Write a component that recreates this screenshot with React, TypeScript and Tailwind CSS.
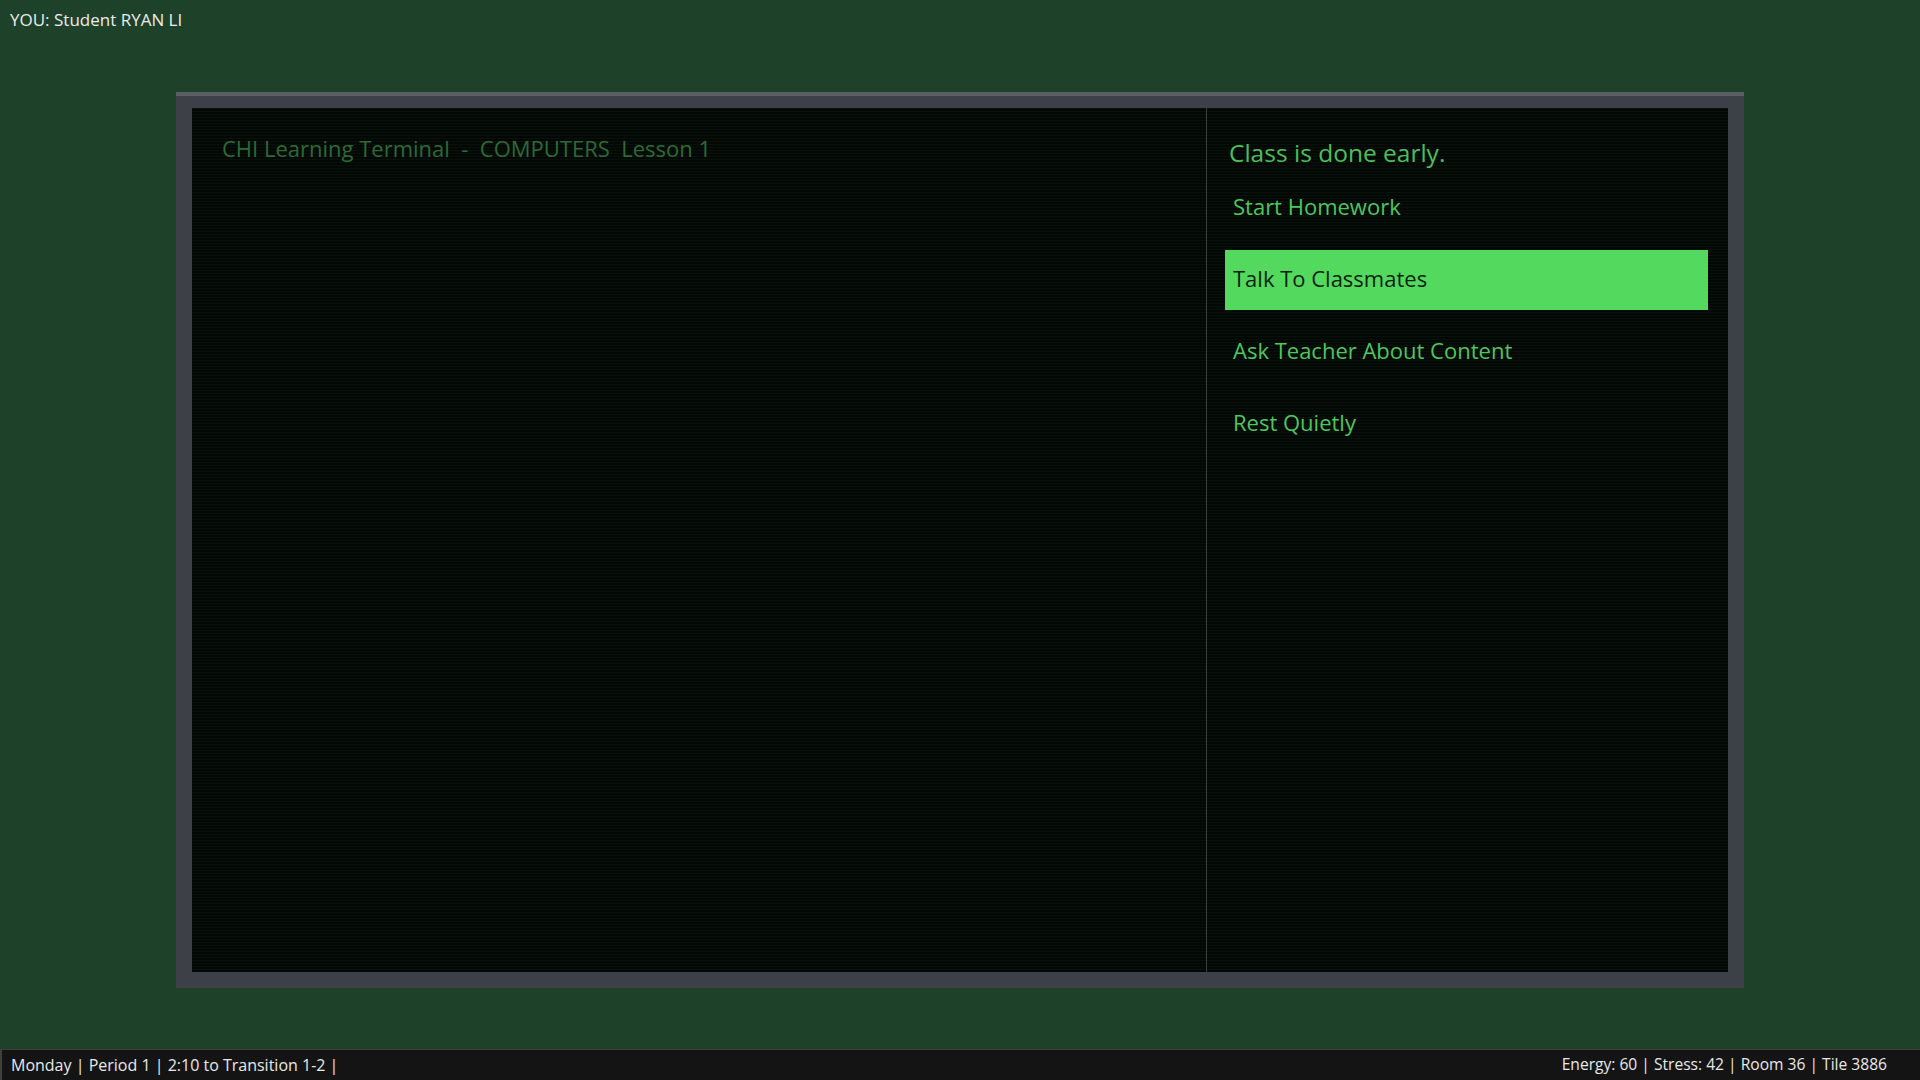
import React from 'react';

const options = ['Start Homework', 'Talk To Classmates', 'Ask Teacher About Content', 'Rest Quietly'];

export default function App() {
  const selected = 1;

  return (
    <div className="flex h-[1080px] w-[1920px] flex-col overflow-hidden bg-[#1e4129] font-['Open_Sans','Noto_Sans',sans-serif]">
      <div className="h-[92px] shrink-0 pl-[10px] pt-[7px] text-[17px] leading-[26px] text-[#ececec]">
        YOU: Student RYAN LI
      </div>

      <div className="mx-[176px] h-[896px] shrink-0 border-t-4 border-[#5a5d64] bg-[#3e4049] px-4 pb-4 pt-3">
        <div className="flex h-full bg-[repeating-linear-gradient(to_bottom,#08110b_0px,#08110b_1px,#030805_1px,#030805_3px)]">
          <div className="w-[1014px] shrink-0 pl-[30px] pt-[25px]">
            <div className="text-[22px] leading-[30px] text-[#2e6a36]">
              CHI Learning Terminal&nbsp; - &nbsp;COMPUTERS&nbsp; Lesson 1
            </div>
          </div>

          <div className="w-px shrink-0 bg-[#3a403c]" />

          <div className="flex flex-1 flex-col pl-[18px] pr-[20px]">
            <div className="mb-[9px] pl-[4px] pt-[29px] text-[24.5px] leading-[32px] text-[#4dbf58]">
              Class is done early.
            </div>
            <div className="flex flex-col gap-3">
              {options.map((opt, i) => (
                <div
                  key={opt}
                  className={
                    i === selected
                      ? 'flex h-[60px] items-center bg-[#53da5e] pb-[3px] pl-[8px] text-[22px] text-[#0b1f0e]'
                      : 'flex h-[60px] items-center pb-[3px] pl-[8px] text-[22px] text-[#4fc65a]'
                  }
                >
                  {opt}
                </div>
              ))}
            </div>
          </div>
        </div>
      </div>

      <div className="flex-1" />

      <div className="flex h-[31px] shrink-0 items-center justify-between border-l-2 border-t border-[#3e403b] bg-[#141414] pl-[9px] pr-[33px] text-[16px] text-[#e8e8e8]">
        <span>Monday | Period 1 | 2:10 to Transition 1-2 |</span>
        <span className="text-[15.6px]">Energy: 60 | Stress: 42 | Room 36 | Tile 3886</span>
      </div>
    </div>
  );
}
